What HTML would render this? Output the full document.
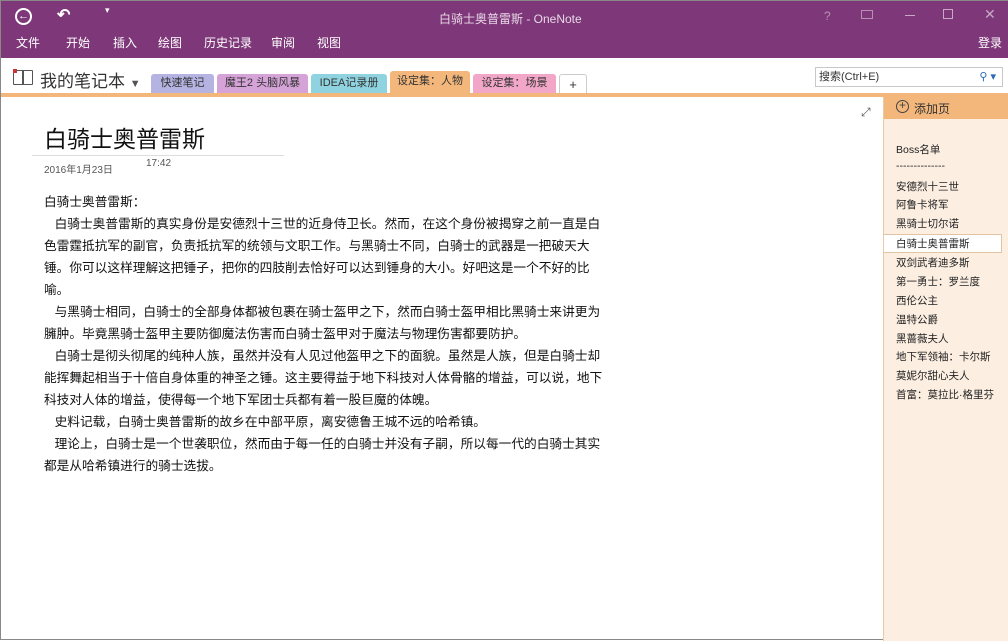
<!DOCTYPE html>
<html><head><meta charset="utf-8"><style>
*{margin:0;padding:0;box-sizing:border-box}
body{width:1008px;height:640px;overflow:hidden;background:#fff;font-family:"Liberation Sans","Noto Sans CJK SC",sans-serif;position:relative;border:1px solid #888}
.top{position:absolute;left:0;top:0;width:1008px;height:57px;background:#7e3879;color:#fff}
.abs{position:absolute;white-space:nowrap}
.menu span{position:absolute;top:33px;font-size:12px}
.nb{position:absolute;top:57px;left:0;width:1008px;height:37px;background:#fff}
.orange{position:absolute;top:92px;left:0;width:1008px;height:4px;background:#f3b77c}
.tab{position:absolute;top:73px;height:19px;font-size:11px;line-height:19px;text-align:center;border-radius:3px 3px 0 0;color:#333}
.side{position:absolute;left:882px;top:96px;width:126px;height:544px;background:#fcefe2;border-left:1px solid #e8c9a8}
.side div{position:absolute;left:12px;font-size:10.5px;color:#222;white-space:nowrap}
.txt{position:absolute;left:43px;top:190px;font-size:12.7px;line-height:22px;color:#111;white-space:nowrap}
</style></head><body>
<div class="top">
<div class="abs" style="left:14px;top:7px;width:17px;height:17px;border:2px solid #fff;border-radius:50%;font-size:11px;line-height:13px;text-align:center;font-weight:bold">←</div>
<div class="abs" style="left:56px;top:4px;font-size:16px;font-weight:bold">↶</div>
<div class="abs" style="left:104px;top:4px;font-size:9px">▾</div>
<div class="abs" style="left:438px;top:9px;font-size:12px;color:#e8d8e6">白骑士奥普雷斯 - OneNote</div>
<div class="abs" style="left:823px;top:8px;font-size:12px;color:#b890b4">?</div>
<div class="abs" style="left:860px;top:9px;width:12px;height:9px;border:1px solid #b890b4"></div>
<div class="abs" style="left:904px;top:14px;width:10px;height:1px;background:#c8a8c4"></div>
<div class="abs" style="left:942px;top:8px;width:10px;height:10px;border:1px solid #c8a8c4"></div>
<div class="abs" style="left:983px;top:5px;font-size:14px;color:#c8a8c4">✕</div>
<div class="menu"><span style="left:15px">文件</span><span style="left:65px">开始</span><span style="left:112px">插入</span><span style="left:157px">绘图</span><span style="left:203px">历史记录</span><span style="left:270px">审阅</span><span style="left:316px">视图</span><span style="left:977px">登录</span></div>
</div>
<div class="nb">
<div class="abs" style="left:12px;top:12px;width:20px;height:15px;border:1.5px solid #555;border-radius:1px"></div>
<div class="abs" style="left:21px;top:12px;width:1.5px;height:15px;background:#555"></div>
<div class="abs" style="left:12px;top:11px;width:4px;height:4px;background:#c33"></div>
<div class="abs" style="left:39px;top:9px;font-size:17px;color:#333">我的笔记本 <span style="font-size:11px;color:#555">▼</span></div>
<div class="abs" style="left:814px;top:9px;width:188px;height:20px;border:1px solid #c8c8c8;font-size:11px;line-height:18px;padding-left:3px;color:#333">搜索(Ctrl+E)<span style="position:absolute;right:6px;color:#2a6ab0;font-size:11px">⚲ ▾</span></div>
</div>
<div class="tab" style="left:150px;width:63px;background:#b4b3e2">快速笔记</div>
<div class="tab" style="left:216px;width:91px;background:#d6a3d8">魔王2 头脑风暴</div>
<div class="tab" style="left:310px;width:76px;background:#8fd3e0">IDEA记录册</div>
<div class="tab" style="left:389px;top:70px;height:22px;width:80px;background:#f3b77c;line-height:20px">设定集：人物</div>
<div class="tab" style="left:472px;width:83px;background:#f2a6c8">设定集：场景</div>
<div class="tab" style="left:558px;width:28px;background:#fff;border:1px solid #ccc;border-bottom:none;font-size:13px">+</div>
<div class="orange"></div>
<div class="abs" style="left:860px;top:104px;font-size:12px;color:#555">⤢</div>
<div class="abs" style="left:43px;top:119px;font-size:23px;color:#111">白骑士奥普雷斯</div>
<div class="abs" style="left:31px;top:154px;width:252px;height:1px;background:#ddd"></div>
<div class="abs" style="left:43px;top:160px;font-size:10px;color:#555">2016年1月23日</div>
<div class="abs" style="left:145px;top:157px;font-size:10px;color:#555">17:42</div>
<div class="txt">白骑士奥普雷斯：<br>
&nbsp;&nbsp;&nbsp;白骑士奥普雷斯的真实身份是安德烈十三世的近身侍卫长。然而，在这个身份被揭穿之前一直是白<br>
色雷霆抵抗军的副官，负责抵抗军的统领与文职工作。与黑骑士不同，白骑士的武器是一把破天大<br>
锤。你可以这样理解这把锤子，把你的四肢削去恰好可以达到锤身的大小。好吧这是一个不好的比<br>
喻。<br>
&nbsp;&nbsp;&nbsp;与黑骑士相同，白骑士的全部身体都被包裹在骑士盔甲之下，然而白骑士盔甲相比黑骑士来讲更为<br>
臃肿。毕竟黑骑士盔甲主要防御魔法伤害而白骑士盔甲对于魔法与物理伤害都要防护。<br>
&nbsp;&nbsp;&nbsp;白骑士是彻头彻尾的纯种人族，虽然并没有人见过他盔甲之下的面貌。虽然是人族，但是白骑士却<br>
能挥舞起相当于十倍自身体重的神圣之锤。这主要得益于地下科技对人体骨骼的增益，可以说，地下<br>
科技对人体的增益，使得每一个地下军团士兵都有着一股巨魔的体魄。<br>
&nbsp;&nbsp;&nbsp;史料记载，白骑士奥普雷斯的故乡在中部平原，离安德鲁王城不远的哈希镇。<br>
&nbsp;&nbsp;&nbsp;理论上，白骑士是一个世袭职位，然而由于每一任的白骑士并没有子嗣，所以每一代的白骑士其实<br>
都是从哈希镇进行的骑士选拔。</div>
<div class="side">
<div style="left:0;top:0;width:126px;height:22px;background:#f3b77c"></div>
<div style="left:12px;top:3px;width:13px;height:13px;border:1.5px solid #444;border-radius:50%;font-size:12px;line-height:9px;text-align:center;color:#444">+</div>
<div style="left:30px;top:3px;font-size:12px;color:#333">添加页</div>
<div style="top:45px">Boss名单</div>
<div style="top:63px">--------------</div>
<div style="top:82px">安德烈十三世</div>
<div style="top:100px">阿鲁卡将军</div>
<div style="top:119px">黑骑士切尔诺</div>
<div style="left:0;top:137px;width:118px;height:19px;background:#fff;border:1px solid #e0c4a4;border-left:none"></div>
<div style="top:139px">白骑士奥普雷斯</div>
<div style="top:158px">双剑武者迪多斯</div>
<div style="top:177px">第一勇士：罗兰度</div>
<div style="top:196px">西伦公主</div>
<div style="top:215px">温特公爵</div>
<div style="top:234px">黑蔷薇夫人</div>
<div style="top:252px">地下军领袖：卡尔斯</div>
<div style="top:271px">莫妮尔甜心夫人</div>
<div style="top:290px">首富：莫拉比·格里芬</div>
</div>
</body></html>
